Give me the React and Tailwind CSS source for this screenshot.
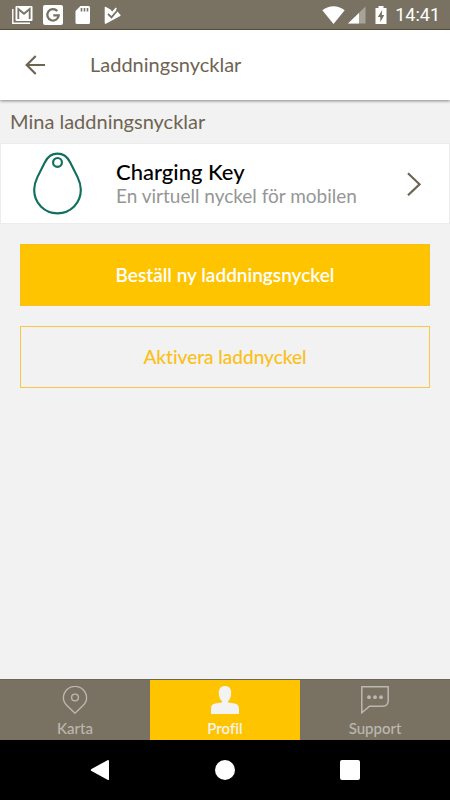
const TABS = [
  { id: 'karta', label: 'Karta', icon: PinIcon },
  { id: 'profil', label: 'Profil', icon: PersonIcon },
  { id: 'support', label: 'Support', icon: ChatIcon },
];

function PinIcon() {
  return (
    <svg className="w-7 h-7" viewBox="0 0 28 28" fill="none" stroke="currentColor" strokeWidth="1.4">
      <path d="M14 27.2L6.2 19.8C3.7 17.4 2.4 15 2.4 12A11.5 11.5 0 0 1 25.6 12C25.6 15 24.3 17.4 21.8 19.8Z" />
      <circle cx="14" cy="11.5" r="3.4" />
    </svg>
  );
}

function PersonIcon() {
  return (
    <svg className="w-7 h-7" viewBox="0 0 28 28" fill="currentColor">
      <path d="M14 0C18 0 20.200 2.700 20.200 6.800C20.200 10.500 18.800 14 16.800 15.600V16.200C19.500 17 23 17 25.800 18.200C27.400 18.900 28 20.500 28 23V28H0V23C0 20.500.6 18.900 2.200 18.200C5 17 8.500 17 11.200 16.200V15.600C9.200 14 7.800 10.500 7.800 6.800C7.800 2.700 10 0 14 0Z" />
    </svg>
  );
}

function ChatIcon() {
  return (
    <svg className="w-7 h-7" viewBox="0 0 28 28" fill="none" stroke="currentColor" strokeWidth="1.5">
      <path d="M.8.8H27.200V14.500Q27.200 20.200 21.500 20.200H8.500L.8 26.700Z" />
      <g fill="currentColor" stroke="none">
        <circle cx="8" cy="11.2" r="1.9" />
        <circle cx="14" cy="11.2" r="1.9" />
        <circle cx="20" cy="11.2" r="1.9" />
      </g>
    </svg>
  );
}

function StatusBar() {
  return (
    <div className="flex items-center justify-between h-[30px] pl-3 pr-2.5 bg-[#797263] border-b border-[#5d5140] text-white">
      <div className="flex items-center gap-2.5">
        {/* Gmail */}
        <svg className="w-[21px] h-5" viewBox="0 0 21 20" fill="none" stroke="currentColor">
          <path d="M.8 4v14.200h17.200" strokeWidth="1.4" />
          <rect x="3.5" y="1" width="17" height="15" rx="1" fill="currentColor" stroke="none" />
          <path d="M6.300 14V4l5.700 4.800L17.700 4V14" stroke="#797263" strokeWidth="1.8" />
        </svg>
        {/* Google */}
        <svg className="w-5 h-5" viewBox="0 0 20 20">
          <rect width="20" height="20" rx="2" fill="currentColor" />
          <path d="M14.300 6.100A5.700 5.700 0 1 0 15.700 10.300H10.300" fill="none" stroke="#797263" strokeWidth="2.3" />
        </svg>
        {/* SD card */}
        <svg className="w-[19px] h-5" viewBox="0 0 19 20">
          <path d="M7.500 1H15.500a1.500 1.500 0 0 1 1.500 1.500V17.500a1.500 1.500 0 0 1-1.500 1.500H4a1.500 1.500 0 0 1-1.500-1.500V6z" fill="currentColor" />
          <path d="M8.500 3v3.500M11.500 3v3.500M14.500 3v3.500" stroke="#797263" strokeWidth="1.6" />
        </svg>
        {/* Play */}
        <svg className="w-5 h-5" viewBox="0 0 20 20">
          <path d="M3.500 1.800L8.500 4.600 10.300 6.800 13.800 4.500 18.300 9.800a.8.8 0 0 1-.1 1.300L3.900 18.700a.8.8 0 0 1-1.200-.7V2.500q0-.9.8-.7z" fill="currentColor" />
          <path d="M6 8.800l3.500 3.500L15.700 5" fill="none" stroke="#797263" strokeWidth="1.8" />
          <path d="M9.500 8.800L14.300 3" fill="none" stroke="currentColor" strokeWidth="1.6" />
        </svg>
      </div>
      <div className="flex items-center">
        <svg className="w-[23px] h-5" viewBox="0 0 23 20" fill="currentColor">
          <path d="M.3 5.300Q11.500-2.700 22.700 5.300L11.500 19z" />
        </svg>
        <svg className="w-5 h-5 ml-0.5" viewBox="0 0 20 20" fill="currentColor">
          <path d="M18.500 1.500v17H1z" opacity=".35" />
          <path d="M12 8v10.500H1z" />
        </svg>
        <svg className="w-3 h-5 ml-2" viewBox="0 0 12 20">
          <path d="M3.500 1h5v2H11.500V19H.5V3h3z" fill="currentColor" />
          <path d="M7.200 5L2.800 12H5.300v5L9.300 10H6.800z" fill="#797263" />
        </svg>
        <span className="ml-2 font-[Roboto,sans-serif] text-lg leading-5">14:41</span>
      </div>
    </div>
  );
}

function Header() {
  return (
    <header className="relative flex items-center h-[70px] bg-white shadow-[0_1px_3px_rgba(0,0,0,0.45)]">
      <button aria-label="Tillbaka" className="ml-[23px] text-[#6e6453]">
        <svg className="w-6 h-6" viewBox="0 0 24 24" fill="none" stroke="currentColor" strokeWidth="2.2">
          <path d="M22 12H4M12.700 3L3.700 12l9 9" />
        </svg>
      </button>
      <h1 className="ml-[43px] text-xl leading-7 pb-0.5 text-[#6e6453]">Laddningsnycklar</h1>
    </header>
  );
}

function KeyRow({ title, subtitle }) {
  return (
    <button className="flex items-center w-full h-[81px] pl-8 pr-7 bg-white border border-[#ececec] text-left">
      <svg className="w-[49px] h-[63px] shrink-0" viewBox="0 0 50 64" fill="none" stroke="#10705d" strokeWidth="2.2">
        <path d="M25 1.500C31 1.500 35 4.500 38 10.500L45.500 25.500C47.700 30 48.800 34 48.800 38.500C48.800 52 38.500 62.500 25 62.500S1.200 52 1.200 38.500C1.200 34 2.300 30 4.500 25.500L12 10.500C15 4.500 19 1.500 25 1.500Z" />
        <circle cx="25" cy="10.5" r="4.5" />
      </svg>
      <span className="flex-1 ml-[34px]">
        <span className="block text-[22px] leading-6 font-medium text-black">{title}</span>
        <span className="block text-[19px] leading-6 text-[#969696]">{subtitle}</span>
      </span>
      <svg className="w-4 h-6" viewBox="0 0 16 24" fill="none" stroke="#6e6453" strokeWidth="2.2">
        <path d="M3 1.200L14.500 12.300 3 23.200" />
      </svg>
    </button>
  );
}

function TabBar({ active }) {
  return (
    <nav className="grid grid-cols-3 h-[61px] border-t border-[#6b6459]">
      {TABS.map(({ id, label, icon: Icon }) => (
        <button
          key={id}
          aria-current={id === active ? 'page' : undefined}
          className={`flex flex-col items-center pt-1.5 ${id === active ? 'bg-[#ffc400] text-[#f3f3f3] font-semibold' : 'bg-[#797263] text-[#bcb8b0] font-medium'}`}
        >
          <Icon />
          <span className="mt-1 text-[15px] leading-5">{label}</span>
        </button>
      ))}
    </nav>
  );
}

function SystemNav() {
  return (
    <div className="flex justify-center h-[60px] bg-black">
      <div className="grid grid-cols-3 w-[375px] items-center justify-items-center text-white">
        <button aria-label="Back">
          <svg className="w-5 h-5" viewBox="0 0 20 20" fill="currentColor">
            <path d="M18 0a1 1 0 0 1 1 1v18a1 1 0 0 1-1.500.800L1.500 11a1.200 1.200 0 0 1 0-2L17.500.200z" />
          </svg>
        </button>
        <button aria-label="Home" className="w-5 h-5 rounded-full bg-white" />
        <button aria-label="Recent apps" className="w-5 h-5 rounded-xs bg-white" />
      </div>
    </div>
  );
}

export default function App() {
  return (
    <div className="flex flex-col min-h-screen bg-[#f2f2f2] font-[Lato,sans-serif] [font-variant-ligatures:none]">
      <StatusBar />
      <Header />
      <main className="flex-1">
        <h2 className="px-2.5 pt-[7px] pb-2 text-xl leading-7 text-[#6e6453]">Mina laddningsnycklar</h2>
        <KeyRow title="Charging Key" subtitle="En virtuell nyckel för mobilen" />
        <div className="flex flex-col gap-5 px-5 pt-5 text-[19px]">
          <button className="h-[62px] bg-[#ffc400] border border-[#f8bd20] font-semibold text-white">
            Beställ ny laddningsnyckel
          </button>
          <button className="h-[62px] border border-[#fbc648] font-medium text-[#fbc017]">
            Aktivera laddnyckel
          </button>
        </div>
      </main>
      <TabBar active="profil" />
      <SystemNav />
    </div>
  );
}
